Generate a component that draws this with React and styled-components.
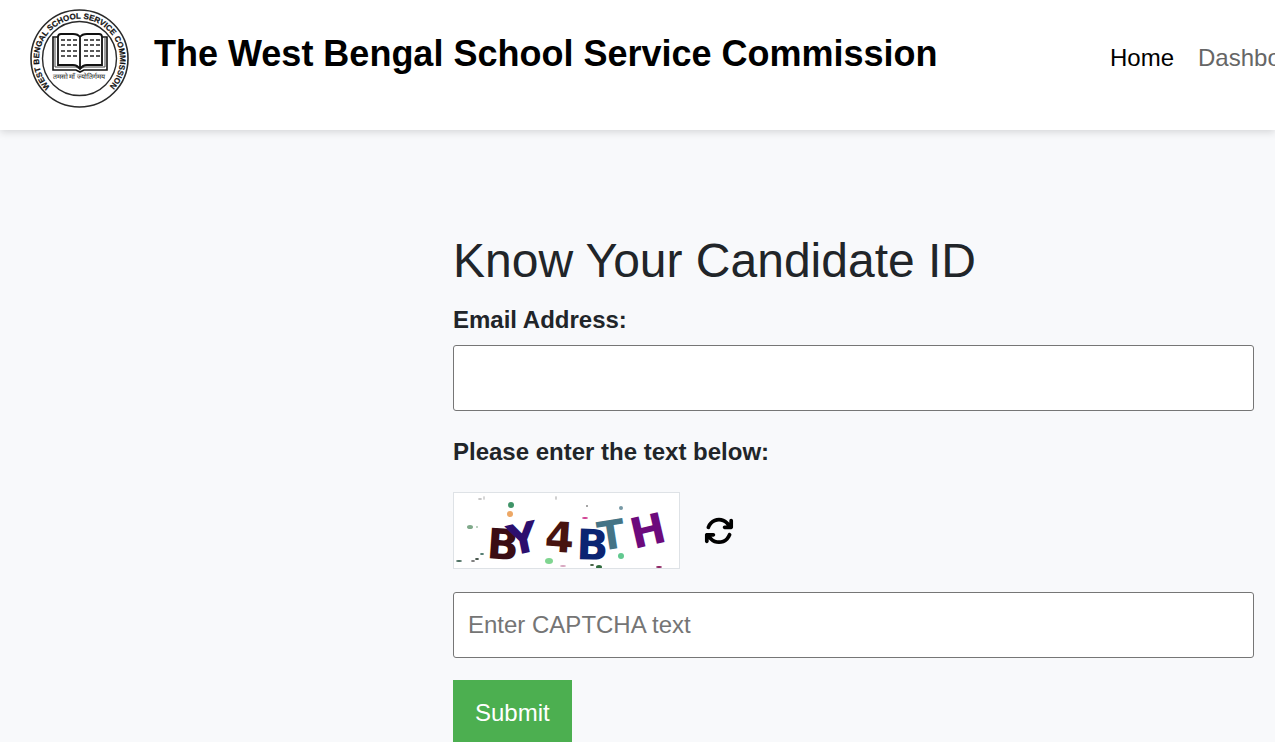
import React from "react";
import styled, { createGlobalStyle } from "styled-components";
import { FaArrowsRotate } from "react-icons/fa6";

const GlobalStyle = createGlobalStyle`
	* {
		box-sizing: border-box;
	}

	body {
		margin: 0;
		background-color: #f8f9fb;
		color: #212529;
		font-family: "Liberation Sans", Arial, sans-serif;
		font-size: 24px;
		line-height: 36px;
		overflow: hidden;
	}
`;

const Header = styled.header`
	display: flex;
	justify-content: space-between;
	padding: 9px 0 21px 30px;
	background-color: #fff;
	box-shadow: 0 2px 8px rgba(0, 0, 0, 0.15);
`;

const Brand = styled.a`
	display: flex;
	gap: 24px;
	color: #000;
	text-decoration: none;
	white-space: nowrap;
`;

const BrandName = styled.span`
	padding-top: 18px;
	font-size: 36px;
	font-weight: bold;
	line-height: 54px;
`;

const Nav = styled.nav`
	display: flex;
	align-items: flex-start;
	gap: 24px;
	width: 165px;
	padding-top: 31px;
	overflow: hidden;
`;

const NavLink = styled.a`
	color: ${(props) => (props.$active ? "#000" : "#666")};
	text-decoration: none;
`;

const Form = styled.form`
	display: flex;
	flex-direction: column;
	align-items: flex-start;
	margin: 102px 21px 0 453px;
`;

const Heading = styled.h1`
	margin: 0 0 12px;
	font-size: 48px;
	font-weight: normal;
	line-height: 58px;
`;

const Label = styled.label`
	margin-bottom: 7px;
	font-weight: bold;
`;

const TextInput = styled.input`
	width: 100%;
	height: 66px;
	margin-bottom: ${(props) => (props.$last ? 22 : 23)}px;
	padding: 0 14px;
	border: 1px solid #767676;
	border-radius: 3px;
	background-color: #fff;
	font: inherit;

	&::placeholder {
		color: #757575;
	}
`;

const CaptchaRow = styled.div`
	display: flex;
	align-items: center;
	gap: 24px;
	margin: 15px 0 23px;
`;

const CaptchaImage = styled.svg`
	display: block;
	border: 1px solid #dee2e6;
	background-color: #fff;
	font-family: "DejaVu Sans", Verdana, sans-serif;
	font-weight: bold;
`;

const RefreshButton = styled.button`
	display: flex;
	padding: 0;
	border: 0;
	background: none;
	color: #000;
	font-size: 30px;
`;

const SubmitButton = styled.button`
	padding: 15px 22px;
	border: 0;
	background-color: #4caf50;
	color: #fff;
	font: inherit;
`;

const PAGE_LINES = [31, 36, 42, 47];

const CAPTCHA_CHARS = [
	{ char: "B", x: 32, y: 65, angle: 4, size: 42, color: "#3a0d14" },
	{ char: "Y", x: 57, y: 63, angle: -12, size: 42, color: "#2c0f6e" },
	{ char: "4", x: 90, y: 58, angle: 4, size: 42, color: "#471410" },
	{ char: "B", x: 122, y: 66, angle: 2, size: 42, color: "#0b2472" },
	{ char: "T", x: 146, y: 58, angle: -9, size: 40, color: "#447486" },
	{ char: "H", x: 180, y: 56, angle: -13, size: 42, color: "#6c0a7c" },
];

// [x, y, rx, ry, color]
const CAPTCHA_SPECKS = [
	[57, 12, 3, 3, "#3f9468"],
	[56, 21, 3, 3, "#eda866"],
	[16, 34, 3, 2, "#7fa98a"],
	[23, 34, 1, 1, "#a9c4ae"],
	[26, 6, 2, 1, "#c3c3c3"],
	[30, 5, 1, 2, "#d2d2d2"],
	[102, 5, 1, 2, "#cccccc"],
	[5, 68, 3, 1, "#456a5c"],
	[19, 68, 2, 1, "#777777"],
	[23, 66, 2, 1, "#3c4a40"],
	[28, 61, 2, 1, "#48766a"],
	[95, 68, 4, 3, "#7fd590"],
	[109, 73, 3, 1, "#d7a5bf"],
	[131, 25, 3, 1, "#cf3b8f"],
	[133, 13, 1, 1, "#888888"],
	[167, 15, 2, 2, "#7799a5"],
	[167, 63, 3, 3, "#62c990"],
	[138, 72, 2, 1, "#3c5a3c"],
	[145, 74, 3, 2, "#2f6b3c"],
	[205, 74, 3, 1, "#8a1c5c"],
];

function Logo() {
	return (
		<svg width="100" height="100" viewBox="0 0 100 100" aria-hidden="true">
			<g fill="none" stroke="#2a2a2a">
				<circle cx="49.5" cy="49.5" r="48.5" strokeWidth="1.6" />
				<circle cx="49.5" cy="49.5" r="37" strokeWidth="1.4" />
			</g>
			<path id="ring" d="M20 78A40.5 40.5 0 1 1 79 78" fill="none" />
			<text fontSize="8" fontWeight="bold" fill="#111" stroke="#111" strokeWidth="0.2">
				<textPath href="#ring">WEST BENGAL SCHOOL SERVICE COMMISSION</textPath>
			</text>
			<path d="M23 28H77V61H54L50 63L46 61H23Z" fill="#fff" stroke="#111" strokeWidth="1.6" />
			<path d="M25 29V58H46L50 60L54 58H75V29" fill="none" stroke="#444" strokeWidth="1" />
			<path
				d="M50 28C48 25 46 25 43 25H31Q28 25 28 28V56H43C46 56 48 57 50 60C52 57 54 56 57 56H72V28Q72 25 69 25H57C54 25 52 25 50 28V60"
				fill="#fff"
				stroke="#111"
				strokeWidth="1.8"
			/>
			{PAGE_LINES.map((y) => (
				<path
					key={y}
					d={`M31 ${y}H47M54 ${y}H70`}
					stroke="#222"
					strokeWidth="1.4"
					strokeDasharray="4 2"
				/>
			))}
			<text x="49" y="70" textAnchor="middle" fontSize="7" fill="#111">
				तमसो माँ ज्योतिर्गमय
			</text>
		</svg>
	);
}

function Captcha() {
	return (
		<CaptchaImage width="227" height="77" viewBox="0 0 225 75" role="img" aria-label="CAPTCHA">
			{CAPTCHA_SPECKS.map(([x, y, rx, ry, color]) => (
				<ellipse key={`${x}-${y}`} cx={x} cy={y} rx={rx} ry={ry} fill={color} />
			))}
			{CAPTCHA_CHARS.map((item, index) => (
				<text
					key={index}
					fill={item.color}
					fontSize={item.size}
					transform={`translate(${item.x} ${item.y}) rotate(${item.angle})`}
				>
					{item.char}
				</text>
			))}
		</CaptchaImage>
	);
}

export default function App() {
	return (
		<>
			<GlobalStyle />
			<Header>
				<Brand href="#">
					<Logo />
					<BrandName>The West Bengal School Service Commission</BrandName>
				</Brand>
				<Nav>
					<NavLink href="#" $active>Home</NavLink>
					<NavLink href="#">Dashboard</NavLink>
				</Nav>
			</Header>
			<main>
				<Form>
					<Heading>Know Your Candidate ID</Heading>
					<Label htmlFor="email">Email Address:</Label>
					<TextInput id="email" type="email" />
					<Label htmlFor="captcha">Please enter the text below:</Label>
					<CaptchaRow>
						<Captcha />
						<RefreshButton type="button" aria-label="Refresh CAPTCHA">
							<FaArrowsRotate />
						</RefreshButton>
					</CaptchaRow>
					<TextInput id="captcha" type="text" placeholder="Enter CAPTCHA text" $last />
					<SubmitButton type="submit">Submit</SubmitButton>
				</Form>
			</main>
		</>
	);
}
